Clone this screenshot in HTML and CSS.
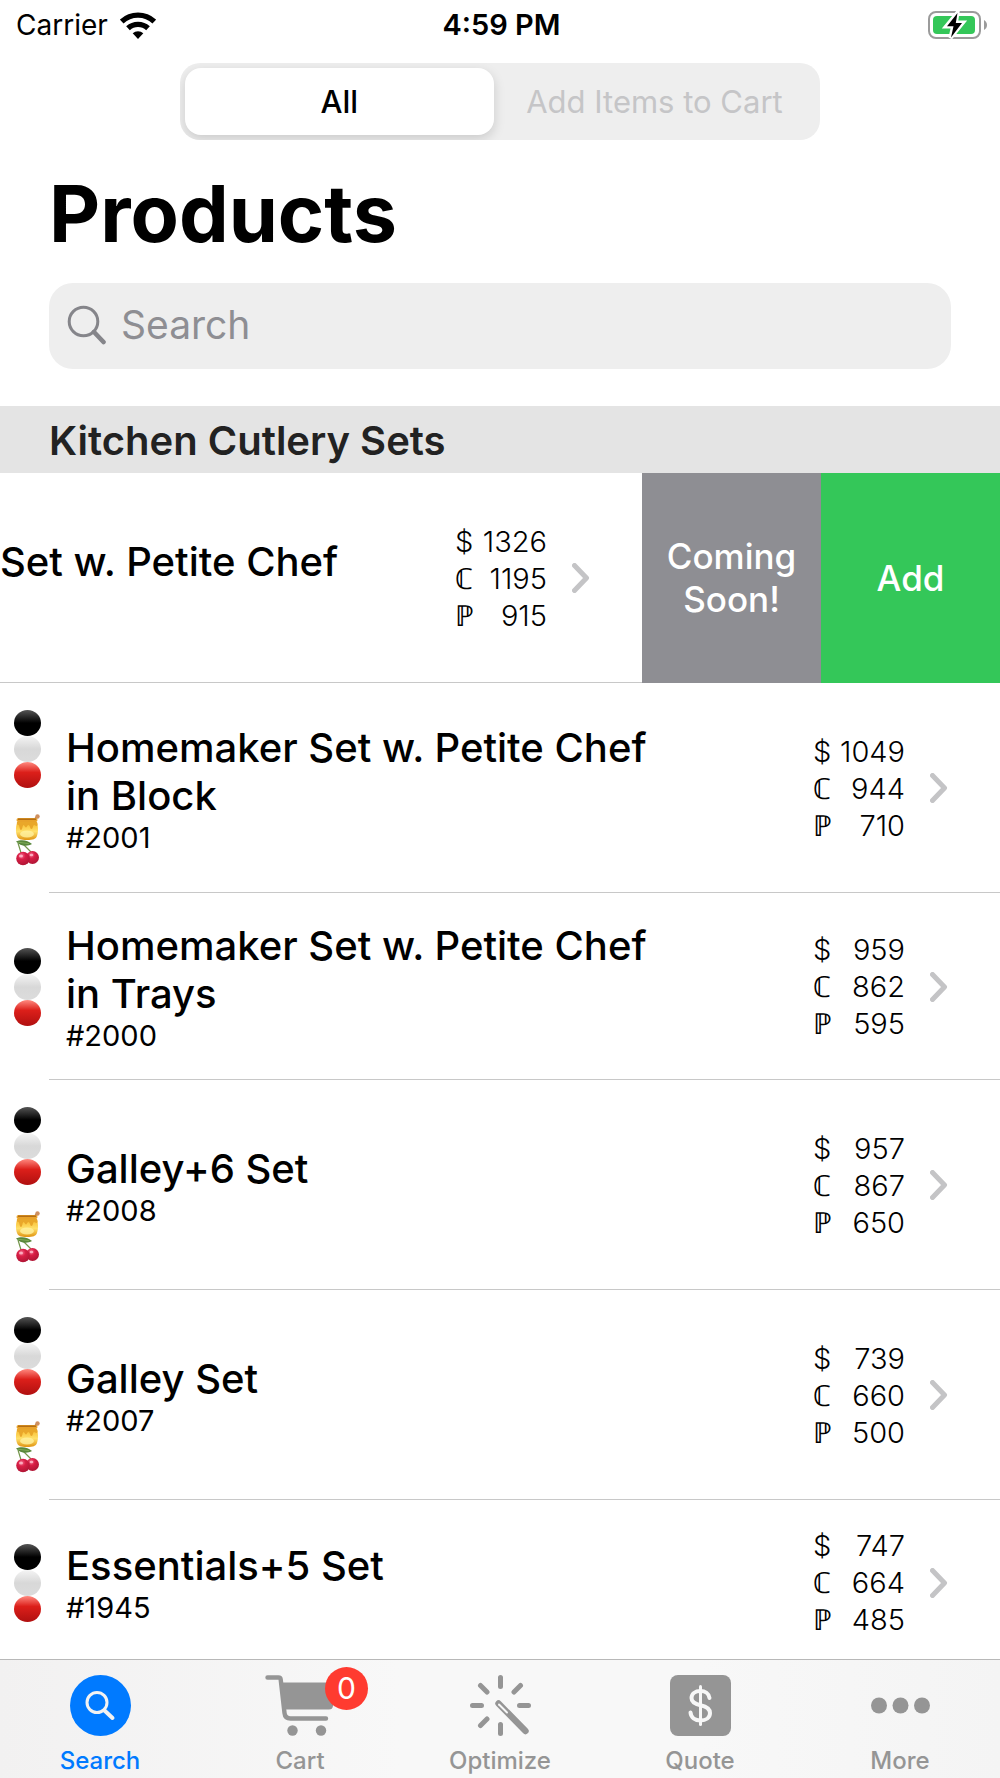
FILE: index.html
```html
<!DOCTYPE html>
<html lang="en">
<head>
<meta charset="UTF-8">
<meta name="viewport" content="width=device-width, initial-scale=1">
<title>Products</title>
<link rel="stylesheet" href="styles.css">
</head>
<body>

    <!-- Shared icons -->
    <svg class="sprite" width="0" height="0" aria-hidden="true">
        <defs>
            <linearGradient id="honey-fill" x1="0" y1="0" x2="0" y2="1">
                <stop offset="0" stop-color="#f6b322"/>
                <stop offset="0.55" stop-color="#ffe06a"/>
                <stop offset="1" stop-color="#e09412"/>
            </linearGradient>
            <radialGradient id="cherry-fill" cx="0.4" cy="0.3" r="0.7">
                <stop offset="0" stop-color="#f5698a"/>
                <stop offset="0.4" stop-color="#d81e45"/>
                <stop offset="1" stop-color="#b01535"/>
            </radialGradient>
        </defs>
        <symbol id="honey" viewBox="0 0 26 26">
            <path d="M19 7 23 3" stroke="#b87546" stroke-width="2"/>
            <circle cx="23.5" cy="2.5" r="2.2" fill="#cf9060"/>
            <path d="M4 7C1.500 11 1.500 18 3 22c1 3 4 4 10 4s9-1 10-4c1.500-4 1.500-11-1-15z" fill="url(#honey-fill)"/>
            <rect x="2.500" y="4" width="21" height="4" rx="2" fill="#e8a32b"/>
            <path d="M4 5.200h18" stroke="#a8610f" stroke-width="1.200"/>
            <path d="M3 8h20c1 2 .5 4-.5 4s-1.500-1-2.500-1-1 4-2.500 4-1.500-4-3-4-1.500 2.500-2.500 2.500S10.500 11 9.500 11s-1 5-2.500 5-1.500-5-2.500-5C3 11 2.500 9 3 8z" fill="#e9a72a"/>
            <ellipse cx="13" cy="20" rx="7" ry="3.500" fill="#fff1a0" opacity="0.8"/>
        </symbol>
        <symbol id="cherries" viewBox="0 0 26 26">
            <path d="M4 3 8 16M9 4l9 9" fill="none" stroke="#74964c" stroke-width="1.200"/>
            <path d="M2 1.500C7-1 14 0 18 4c-5 3-12 2-16-2.500z" fill="#58873b"/>
            <path d="M4 2.200 15 3.700" stroke="#88b25d" stroke-width="0.800"/>
            <circle cx="18.500" cy="17.500" r="6.500" fill="url(#cherry-fill)"/>
            <circle cx="9" cy="18.500" r="6.800" fill="url(#cherry-fill)"/>
            <ellipse cx="7" cy="16" rx="2" ry="1.500" fill="#ffc2cf" opacity="0.8"/>
            <ellipse cx="17.500" cy="15" rx="1.800" ry="1.200" fill="#ffc2cf" opacity="0.8"/>
        </symbol>
        <symbol id="chevron" viewBox="0 0 18 30">
            <path d="M2.500 2.500 14.500 15 2.500 27.500" fill="none" stroke="#c4c4c6" stroke-width="5" stroke-linecap="round" stroke-linejoin="round"/>
        </symbol>
    </svg>

    <!-- Status Bar -->
    <div class="status-bar">
        <div class="carrier">
            <span>Carrier</span>
            <svg width="36" height="27" viewBox="0 0 36 27" aria-hidden="true">
                <path d="M1.700 9.500a24 24 0 0 1 32.600 0M8 16.300a14.700 14.700 0 0 1 20 0" fill="none" stroke="#000" stroke-width="5.400"/>
                <path d="M18 27 12.700 21.300a7.800 7.800 0 0 1 10.600 0z"/>
            </svg>
        </div>
        <span class="time">4:59 PM</span>
        <svg class="battery" width="59" height="28" viewBox="0 0 59 28" aria-hidden="true">
            <rect x="1" y="1" width="51" height="26" rx="7" fill="none" stroke="#9b9b9b" stroke-width="2"/>
            <path d="M56 9c4 2 4 8 0 10z" fill="#9b9b9b"/>
            <rect x="5" y="5" width="42" height="18" rx="4" fill="#34c759"/>
            <path d="M29.500 1.500 18 15.500h7L22.500 27 35 11.500h-7z" fill="#000" stroke="#fff" stroke-width="4"/>
            <path d="M29.500 2 19 15.200h6.500L23 26.500 34 12h-6.200z"/>
        </svg>
    </div>

    <header class="page-header">
        <div class="segments">
            <button class="segment selected">All</button>
            <button class="segment" disabled>Add Items to Cart</button>
        </div>
        <h1>Products</h1>
        <label class="search-box">
            <svg width="40" height="40" viewBox="0 0 40 40" aria-hidden="true">
                <circle cx="16.500" cy="16.500" r="14.300" fill="none" stroke="#85858a" stroke-width="3"/>
                <path d="M27 27 36.500 37" stroke="#85858a" stroke-width="4.600" stroke-linecap="round"/>
            </svg>
            <input type="search" placeholder="Search" aria-label="Search">
        </label>
    </header>

    <!-- Product List -->
    <main class="products">
        <h2>Kitchen Cutlery Sets</h2>
        <ul>
            <li class="product swiped">
                <div class="details">
                    <div class="name">Set w. Petite Chef</div>
                </div>
                <dl class="prices">
                    <div><dt>$</dt><dd>1326</dd></div>
                    <div><dt>ℂ</dt><dd>1195</dd></div>
                    <div><dt>ℙ</dt><dd>915</dd></div>
                </dl>
                <svg class="chevron"><use href="#chevron"/></svg>
                <div class="actions">
                    <button class="soon">Coming Soon!</button>
                    <button class="add">Add</button>
                </div>
            </li>
            <li class="product">
                <div class="options">
                    <i class="dot black"></i><i class="dot white"></i><i class="dot red"></i>
                    <svg class="honey"><use href="#honey"/></svg>
                    <svg><use href="#cherries"/></svg>
                </div>
                <div class="details">
                    <div class="name">Homemaker Set w. Petite Chef in Block</div>
                    <div class="number">#2001</div>
                </div>
                <dl class="prices">
                    <div><dt>$</dt><dd>1049</dd></div>
                    <div><dt>ℂ</dt><dd>944</dd></div>
                    <div><dt>ℙ</dt><dd>710</dd></div>
                </dl>
                <svg class="chevron"><use href="#chevron"/></svg>
            </li>
            <li class="product">
                <div class="options">
                    <i class="dot black"></i><i class="dot white"></i><i class="dot red"></i>
                </div>
                <div class="details">
                    <div class="name">Homemaker Set w. Petite Chef in Trays</div>
                    <div class="number">#2000</div>
                </div>
                <dl class="prices">
                    <div><dt>$</dt><dd>959</dd></div>
                    <div><dt>ℂ</dt><dd>862</dd></div>
                    <div><dt>ℙ</dt><dd>595</dd></div>
                </dl>
                <svg class="chevron"><use href="#chevron"/></svg>
            </li>
            <li class="product">
                <div class="options">
                    <i class="dot black"></i><i class="dot white"></i><i class="dot red"></i>
                    <svg class="honey"><use href="#honey"/></svg>
                    <svg><use href="#cherries"/></svg>
                </div>
                <div class="details">
                    <div class="name">Galley+6 Set</div>
                    <div class="number">#2008</div>
                </div>
                <dl class="prices">
                    <div><dt>$</dt><dd>957</dd></div>
                    <div><dt>ℂ</dt><dd>867</dd></div>
                    <div><dt>ℙ</dt><dd>650</dd></div>
                </dl>
                <svg class="chevron"><use href="#chevron"/></svg>
            </li>
            <li class="product">
                <div class="options">
                    <i class="dot black"></i><i class="dot white"></i><i class="dot red"></i>
                    <svg class="honey"><use href="#honey"/></svg>
                    <svg><use href="#cherries"/></svg>
                </div>
                <div class="details">
                    <div class="name">Galley Set</div>
                    <div class="number">#2007</div>
                </div>
                <dl class="prices">
                    <div><dt>$</dt><dd>739</dd></div>
                    <div><dt>ℂ</dt><dd>660</dd></div>
                    <div><dt>ℙ</dt><dd>500</dd></div>
                </dl>
                <svg class="chevron"><use href="#chevron"/></svg>
            </li>
            <li class="product">
                <div class="options">
                    <i class="dot black"></i><i class="dot white"></i><i class="dot red"></i>
                </div>
                <div class="details">
                    <div class="name">Essentials+5 Set</div>
                    <div class="number">#1945</div>
                </div>
                <dl class="prices">
                    <div><dt>$</dt><dd>747</dd></div>
                    <div><dt>ℂ</dt><dd>664</dd></div>
                    <div><dt>ℙ</dt><dd>485</dd></div>
                </dl>
                <svg class="chevron"><use href="#chevron"/></svg>
            </li>
        </ul>
    </main>

    <!-- Tab Bar -->
    <nav class="tab-bar">
        <a class="tab active" href="#search">
            <svg width="61" height="61" viewBox="0 0 61 61" aria-hidden="true">
                <circle cx="30.500" cy="30.500" r="30.500" fill="currentColor"/>
                <circle cx="27" cy="27.500" r="10" fill="none" stroke="#f2f2f2" stroke-width="3"/>
                <path d="M34.500 35.500 42.500 43" stroke="#f2f2f2" stroke-width="4" stroke-linecap="round"/>
            </svg>
            <span>Search</span>
        </a>
        <a class="tab" href="#cart">
            <span class="cart-icon">
                <svg width="72" height="61" viewBox="0 0 72 61" aria-hidden="true">
                    <path d="M3.500 2.500h11q2 0 2.200 2L20.500 38q.5 5.500 6 5.500H62" fill="none" stroke="currentColor" stroke-width="4.400" stroke-linecap="round" stroke-linejoin="round"/>
                    <path d="M18.500 7.500H72L69 31q-.5 3.500-4 3.500H21z" fill="currentColor"/>
                    <circle cx="28.500" cy="55.500" r="5.200" fill="currentColor"/>
                    <circle cx="57" cy="55.500" r="5.200" fill="currentColor"/>
                </svg>
                <span class="badge">0</span>
            </span>
            <span>Cart</span>
        </a>
        <a class="tab" href="#optimize">
            <svg width="61" height="61" viewBox="0 0 61 61" aria-hidden="true">
                <path d="M30.500 2.500v9M30.500 49.500v9M2.500 30.500h9M49.500 30.500h9M10.500 10.500l6.500 6.500M50.500 10.500 44 17M10.500 50.500 17 44" stroke="currentColor" stroke-width="5" stroke-linecap="round"/>
                <path d="M28.500 28.500 55.500 56" stroke="currentColor" stroke-width="6.400" stroke-linecap="round"/>
                <path d="M29 29.500 37 37.500" stroke="#f7f7f7" stroke-width="2" stroke-linecap="round"/>
            </svg>
            <span>Optimize</span>
        </a>
        <a class="tab" href="#quote">
            <svg width="61" height="61" viewBox="0 0 61 61" aria-hidden="true">
                <rect width="61" height="61" rx="8" fill="currentColor"/>
                <path d="M39.500 23c-.5-4.500-4.500-7-9-7-5.500 0-9 3-9 7 0 4.500 3.500 6 9 7.200 6 1.300 9.500 3 9.500 7.800 0 4.500-4 7.500-9.500 7.500s-9.500-3-10-8" fill="none" stroke="#f7f7f7" stroke-width="4" stroke-linecap="round"/>
                <path d="M30.500 11.500v38" stroke="#f7f7f7" stroke-width="3" stroke-linecap="round"/>
            </svg>
            <span>Quote</span>
        </a>
        <a class="tab" href="#more">
            <svg width="61" height="61" viewBox="0 0 61 61" aria-hidden="true">
                <circle cx="9" cy="30.500" r="8" fill="currentColor"/>
                <circle cx="30.500" cy="30.500" r="8" fill="currentColor"/>
                <circle cx="52" cy="30.500" r="8" fill="currentColor"/>
            </svg>
            <span>More</span>
        </a>
    </nav>

</body>
</html>
```
FILE: styles.css
```css
* {
    box-sizing: border-box;
}

body {
    margin: 0;
    height: 100vh;
    display: flex;
    flex-direction: column;
    overflow: hidden;
    background-color: #fff;
    color: #000;
    font-family: Inter, 'Liberation Sans', sans-serif;
}

button, input {
    font-family: inherit;
    border: none;
    margin: 0;
    padding: 0;
}

h1, h2, ul, dl, dd {
    margin: 0;
    padding: 0;
}

.sprite {
    position: absolute;
}

/* Status Bar */
.status-bar {
    display: grid;
    grid-template-columns: 1fr auto 1fr;
    align-items: center;
    padding: 7px 13px 0 16px;
    font-size: 28px;
    line-height: 36px;
}

.carrier {
    display: flex;
    align-items: center;
    gap: 12px;
}

.time {
    font-size: 29px;
    font-weight: 600;
}

.battery {
    justify-self: end;
}

/* Header */
.page-header {
    display: flex;
    flex-direction: column;
    padding: 20px 49px 37px;
}

.segments {
    display: flex;
    align-self: center;
    width: 71%;
    padding: 5px;
    background-color: #eee;
    border-radius: 20px;
    overflow: hidden;
}

.segment {
    flex: 1;
    height: 67px;
    border-radius: 16px;
    background-color: transparent;
    color: #c5c5c7;
    font-size: 31px;
}

.segment.selected {
    flex: 0 0 49%;
    background-color: #fff;
    color: #000;
    font-weight: 500;
    box-shadow: 0 4px 12px rgba(0, 0, 0, 0.15);
}

h1 {
    margin: 25px 0 22px;
    font-size: 79px;
    line-height: 96px;
    font-weight: 700;
}

.search-box {
    display: flex;
    align-items: center;
    gap: 14px;
    height: 86px;
    padding: 0 18px 2px;
    background-color: #eee;
    border-radius: 24px;
}

.search-box input {
    flex: 1;
    min-width: 0;
    background-color: transparent;
    font-size: 39px;
    line-height: 48px;
    outline: none;
}

.search-box input::placeholder {
    color: #8e8e93;
    opacity: 1;
}

/* Product List */
.products {
    flex: 1;
    min-height: 0;
    overflow: hidden;
}

h2 {
    padding: 11px 49px 8px;
    background-color: #e4e4e4;
    color: #222;
    font-size: 40px;
    line-height: 48px;
    font-weight: 600;
}

ul {
    list-style: none;
}

.product {
    position: relative;
    display: flex;
    align-items: center;
    padding: 27px 52px 27px 14px;
}

/* separator starts after the option dots */
.product::after {
    content: "";
    position: absolute;
    left: 49px;
    right: 0;
    bottom: 0;
    height: 1px;
    background-color: #c8c8c8;
}

.options {
    display: flex;
    flex-direction: column;
    width: 27px;
    margin-right: 25px;
}

.options svg {
    width: 26px;
    height: 26px;
}

.options .honey {
    margin-top: 26px;
}

.dot {
    height: 26px;
    border-radius: 50%;
}

.black {
    background: linear-gradient(#555, #111 40%, #000 50%);
}

.white {
    background: linear-gradient(#f4f4f4, #d8d8d8 50%, #dcdcdc);
}

.red {
    background: linear-gradient(#ff8a80, #dc1f1a 40%, #b01010);
}

.details {
    flex: 1;
    min-width: 0;
    padding-top: 2px;
}

.name {
    max-width: 600px;
    font-size: 40px;
    line-height: 48px;
    font-weight: 500;
}

.number {
    font-size: 29px;
    line-height: 35px;
}

.prices {
    width: 92px;
    margin-right: 25px;
    font-size: 29px;
    line-height: 37px;
    font-weight: 300;
}

.prices div {
    display: flex;
    justify-content: space-between;
}

.prices dt {
    font-family: Inter, 'DejaVu Sans', sans-serif;
}

.chevron {
    width: 18px;
    height: 30px;
}

.product.swiped {
    height: 210px;
    padding: 0;
}

.swiped::after {
    left: 0;
}

.swiped .details {
    padding-bottom: 35px;
}

.swiped .chevron {
    margin-right: 52px;
}

.actions {
    z-index: 1;
    display: flex;
    align-self: stretch;
    width: 358px;
}

.actions button {
    flex: 1;
    padding: 0 20px;
    color: #fff;
    font-size: 35px;
    line-height: 43px;
    font-weight: 500;
}

.soon {
    background-color: #8e8e93;
}

.add {
    background-color: #34c759;
}

/* Tab Bar */
.tab-bar {
    display: flex;
    border-top: 1px solid #b8b8b8;
    background: linear-gradient(90deg, #f2f1f1, #f8f8f8 40%, #f8f8f8 70%, #f4f4f4);
}

.tab {
    flex: 1;
    display: flex;
    flex-direction: column;
    align-items: center;
    gap: 10px;
    padding: 15px 0 2px;
    color: #959595;
    font-size: 24px;
    line-height: 30px;
    font-weight: 500;
    text-decoration: none;
}

.tab svg {
    display: block;
}

.tab.active {
    color: #007aff;
}

.cart-icon {
    position: relative;
}

.badge {
    position: absolute;
    top: -8px;
    right: -32px;
    width: 43px;
    border-radius: 50%;
    background-color: #ff3b30;
    color: #fff;
    font-size: 30px;
    line-height: 43px;
    font-weight: 400;
    text-align: center;
}
```
